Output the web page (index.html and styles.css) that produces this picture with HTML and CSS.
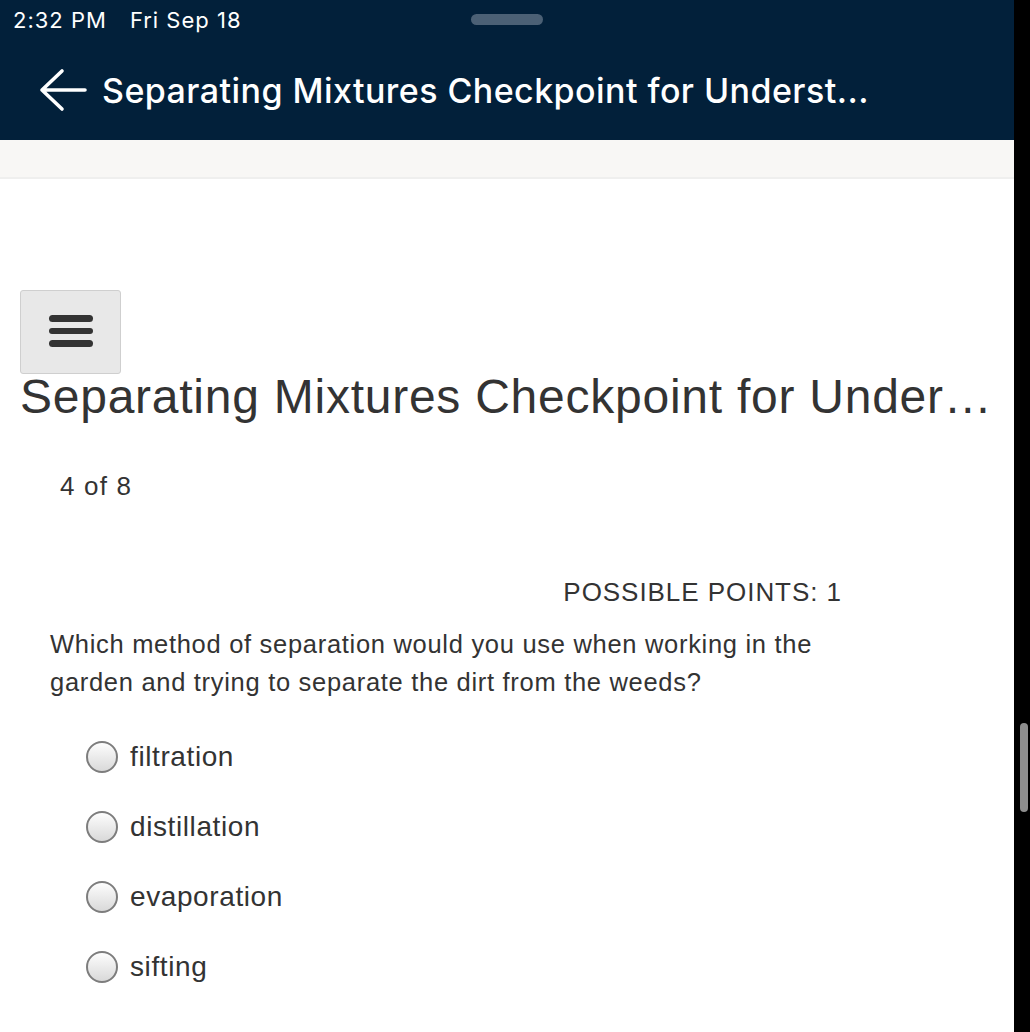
FILE: index.html
```html
<!DOCTYPE html>
<html>
<head>
<meta charset="utf-8">
<link rel="stylesheet" href="styles.css">
</head>
<body>
<div class="screen">
  <div class="page">
    <header class="appbar">
      <div class="status">
        <span class="time">2:32 PM</span>
        <span class="date">Fri Sep 18</span>
        <span class="grabber"></span>
      </div>
      <div class="navrow">
        <svg class="back" width="48" height="44" viewBox="0 0 48 44">
          <path d="M23 3 L3 22 L23 41 M3 22 L46 22" fill="none" stroke="#fff" stroke-width="3.6" stroke-linecap="round" stroke-linejoin="round"/>
        </svg>
        <span class="navtitle">Separating Mixtures Checkpoint for Underst...</span>
      </div>
    </header>
    <div class="band"></div>
    <main class="content">
      <button class="menu-btn" aria-label="menu">
        <span></span><span></span><span></span>
      </button>
      <h1 class="title">Separating Mixtures Checkpoint for Under…</h1>
      <div class="counter">4 of 8</div>
      <section class="question">
        <div class="points">POSSIBLE POINTS: 1</div>
        <p class="qtext">Which method of separation would you use when working in the garden and trying to separate the dirt from the weeds?</p>
        <ul class="options">
          <li><span class="radio"></span><span class="label">filtration</span></li>
          <li><span class="radio"></span><span class="label">distillation</span></li>
          <li><span class="radio"></span><span class="label">evaporation</span></li>
          <li><span class="radio"></span><span class="label">sifting</span></li>
        </ul>
      </section>
    </main>
  </div>
  <div class="rail"><span class="thumb"></span></div>
</div>
</body>
</html>
```
FILE: styles.css
```css
html, body {
  margin: 0;
  padding: 0;
  background: #fff;
}
body {
  width: 1030px;
  height: 1032px;
  overflow: hidden;
  font-family: "Liberation Sans", Arial, sans-serif;
}
.screen {
  display: flex;
  height: 1032px;
}
.page {
  flex: 1;
  min-width: 0;
  background: #fff;
}
.rail {
  width: 16px;
  background: #000;
  position: relative;
}
.thumb {
  position: absolute;
  left: 6px;
  top: 723px;
  width: 8px;
  height: 89px;
  border-radius: 4px;
  background: #8e8e8e;
}
.appbar {
  background: #02203a;
  height: 140px;
  color: #fff;
  font-family: Inter, "Liberation Sans", sans-serif;
}
.status {
  position: relative;
  height: 40px;
  display: flex;
  align-items: center;
  padding-left: 13px;
  font-size: 22px;
  font-weight: 400;
  letter-spacing: 1px;
}
.status .date {
  margin-left: 23px;
}
.grabber {
  position: absolute;
  left: 471px;
  top: 14px;
  width: 72px;
  height: 11px;
  border-radius: 6px;
  background: #4b6075;
}
.navrow {
  display: flex;
  align-items: center;
  height: 100px;
  padding-left: 39px;
}
.back {
  display: block;
  margin-right: 15px;
}
.navtitle {
  font-size: 34px;
  font-weight: 500;
  white-space: nowrap;
  letter-spacing: 0.44px;
}
.band {
  height: 37px;
  background: #f8f7f5;
  border-bottom: 2px solid #efefee;
}
.content {
  padding: 111px 0 0 20px;
  color: #333;
}
.menu-btn {
  display: flex;
  flex-direction: column;
  justify-content: center;
  align-items: center;
  gap: 6px;
  width: 101px;
  height: 84px;
  padding: 0 0 2px;
  margin: 0;
  background: #e8e8e8;
  border: 1px solid #cfcfcf;
  border-radius: 3px;
}
.menu-btn span {
  display: block;
  width: 44px;
  height: 6.5px;
  border-radius: 4px;
  background: #333;
}
.title {
  margin: -1px 0 0;
  font-size: 48px;
  font-weight: 400;
  line-height: 48px;
  white-space: nowrap;
  letter-spacing: 0.75px;
}
.counter {
  margin: 50px 0 0 40px;
  font-size: 26px;
  line-height: 30px;
  letter-spacing: 1.2px;
}
.question {
  width: 800px;
  margin: 76px 0 0 30px;
}
.points {
  text-align: right;
  font-size: 26px;
  line-height: 30px;
  letter-spacing: 0.95px;
  margin-right: 8px;
}
.qtext {
  margin: 18px 0 0;
  font-size: 25.5px;
  line-height: 38px;
  letter-spacing: 0.7px;
}
.options {
  list-style: none;
  margin: 21px 0 0;
  padding: 0 0 0 36px;
}
.options li {
  display: flex;
  align-items: center;
  height: 70px;
}
.radio {
  box-sizing: border-box;
  width: 32px;
  height: 32px;
  border-radius: 50%;
  border: 2px solid #7d7d7d;
  background: linear-gradient(#fdfdfd, #d9d9d9);
  margin-right: 12px;
}
.label {
  font-size: 28px;
  letter-spacing: 0.6px;
}
```
